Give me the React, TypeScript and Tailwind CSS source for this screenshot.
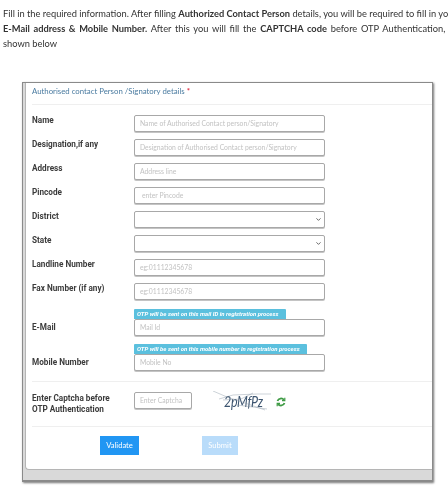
import React from "react";
import { ChevronDown } from "lucide-react";

const inputBase = "h-[17px] shrink-0 rounded-[2px] border border-[#a8a8a8] shadow-[0_1px_0_#c4c4c4] flex items-center justify-between bg-white text-[6.8px] text-[#c2c2c2] font-['Lato',sans-serif] pl-[5px] pr-[1px] overflow-hidden whitespace-nowrap";
const inputCls = inputBase + " w-[191px]";
const labelCls = "w-[102px] shrink-0 text-[8.2px] leading-[10px] font-bold text-[#3c3c3c] font-['Roboto',sans-serif]";

function Row({ label, ph, select, indent }: { label: string; ph?: string; select?: boolean; indent?: boolean }) {
  return (
    <div className="flex mb-[7px]">
      <div className={labelCls}>{label}</div>
      <div className={inputCls}>
        <span className={indent ? "pl-[2px]" : ""}>{ph}</span>
        {select && <ChevronDown size={7} strokeWidth={3} className="text-[#555] mr-[1px]" />}
      </div>
    </div>
  );
}

function BadgeRow({ label, ph, note, w }: { label: string; ph: string; note: string; w: string }) {
  return (
    <div className="flex items-center">
      <div className={labelCls + " pt-[9px]"}>{label}</div>
      <div>
        <div className={"h-[10px] rounded-t-[1px] bg-[#5bc0de] text-white text-[6px] leading-[10px] font-bold italic pl-[3px] whitespace-nowrap font-['Roboto',sans-serif] " + w}>{note}</div>
        <div className={inputCls}>{ph}</div>
      </div>
    </div>
  );
}

function Captcha() {
  return (
    <div className="relative w-[62px] h-[22px] ml-[21px] mt-[-1px] shrink-0">
      <div className="absolute left-[11px] top-[2px] text-[12.5px] leading-[18px] italic text-[#3d5570] font-['Lato',sans-serif] tracking-[-0.3px] whitespace-nowrap scale-y-125">2pMfPz</div>
      <svg className="absolute inset-0" width="62" height="22" viewBox="0 0 62 22" fill="none" stroke="#7f8d9c" strokeWidth="0.4">
        <path d="M0 0 L14 6 L32 12 L52 19" />
        <path d="M6 8 L20 4 L44 3 L58 3" />
        <path d="M10 9 L28 8 L40 2" />
        <path d="M24 14 L40 16 L54 18" />
      </svg>
    </div>
  );
}

export default function App() {
  return (
    <div className="w-[448px] h-[504px] overflow-hidden bg-white relative blur-[0.35px]">
      <div className="pt-[6px] pl-[3px] w-[470px] text-[9.3px] leading-[15px] text-[#333] font-['Lato',sans-serif] whitespace-nowrap">
        <p>Fill in the required information. After filling <b>Authorized Contact Person</b> details, you will be required to fill in your</p>
        <p className="[word-spacing:1.35px]"><b>E-Mail address &amp; Mobile Number.</b> After this you will fill the <b>CAPTCHA code</b> before OTP Authentication, as</p>
        <p>shown below</p>
      </div>

      <div className="ml-[22px] mt-[31px] w-[411px] h-[400px] border border-[#8a8a8a] border-b-[2px] bg-[#d9d9d9] shadow-[1px_1px_2px_#777]">
        <div className="ml-[2px] h-[387px] rounded-bl-[4px] border-l border-b border-[#b5b5b5] bg-white pl-[6px] overflow-hidden">
          <div className="h-[21px] pt-[2px] text-[7.8px] leading-[12px] text-[#4a7ba0] font-['Lato',sans-serif] whitespace-nowrap">
            Authorised contact Person /Signatory details <span className="text-[#e0243a] font-bold">*</span>
          </div>
          <div className="border-t border-[#efefef] mb-[10px]" />
          <Row label="Name" ph="Name of Authorised Contact person/Signatory" />
          <Row label="Designation,if any" ph="Designation of Authorised Contact person/Signatory" />
          <Row label="Address" ph="Address line" />
          <Row label="Pincode" ph="enter Pincode" indent />
          <Row label="District" select />
          <Row label="State" select />
          <Row label="Landline Number" ph="eg:01112345678" />
          <Row label="Fax Number (if any)" ph="eg:01112345678" />
          <div className="pt-[2px]">
            <BadgeRow label="E-Mail" ph="Mail Id" w="w-[152px]" note="OTP will be sent on this mail ID in registration process" />
          </div>
          <div className="mt-[8px]">
            <BadgeRow label="Mobile Number" ph="Mobile No" w="w-[173px]" note="OTP will be sent on this mobile number in registration process" />
          </div>
          <div className="border-t border-[#efefef] mt-[10px]" />
          <div className="flex pt-[10px] h-[44px]">
            <div className={labelCls + " leading-[11px] pt-[1px]"}>Enter Captcha before<br />OTP Authentication</div>
            <div className={inputBase + " w-[58px]"}>Enter Captcha</div>
            <Captcha />
            <svg className="ml-[1px] mt-[5px]" width="10" height="10" viewBox="0 0 10 10" fill="none" stroke="#3f9b45" strokeWidth="1.8">
              <path d="M1.5 4 A3.7 3.7 0 0 1 8 3" />
              <path d="M8.5 6 A3.7 3.7 0 0 1 2 7" />
              <path d="M8.8 0.8 V3.6 H6" strokeWidth="1.2" />
              <path d="M1.2 9.2 V6.4 H4" strokeWidth="1.2" />
            </svg>
          </div>
          <div className="border-t border-[#efefef]" />
          <div className="flex pt-[9px] pl-[68px] text-[7.6px] text-white font-['Lato',sans-serif]">
            <div className="w-[39px] h-[19px] flex items-center justify-center bg-[#2196f3]">Validate</div>
            <div className="w-[36px] h-[19px] ml-[63px] flex items-center justify-center bg-[#b9dcfa]">Submit</div>
          </div>
        </div>
      </div>
    </div>
  );
}
